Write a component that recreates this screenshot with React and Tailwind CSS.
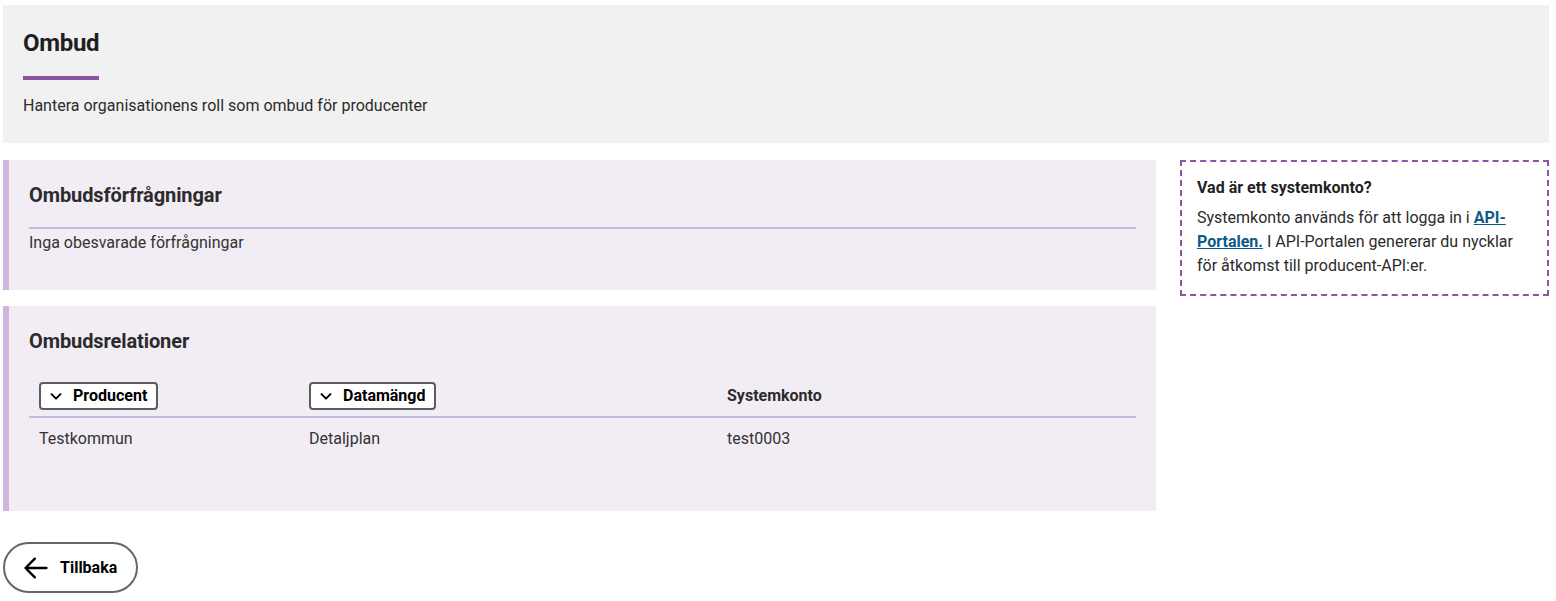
import React from "react";

function Chevron() {
  return (
    <svg width="18" height="18" viewBox="0 0 24 24" fill="none" stroke="currentColor" strokeWidth="2.6" strokeLinecap="round" strokeLinejoin="round">
      <path d="M6 9.5l6 6 6-6" />
    </svg>
  );
}

function SortButton({ label }) {
  return (
    <button className="flex items-center gap-[8px] h-[28px] pl-[6px] pr-[9px] rounded-[4px] border-2 border-[#5c5c5c] bg-white text-[16px] font-bold text-black">
      <Chevron />
      {label}
    </button>
  );
}

function Card({ title, children, className = "" }) {
  return (
    <section className={`border-l-[6px] border-[#cdb7dc] bg-[#f2ecf4] px-5 ${className}`}>
      <h2 className="text-[20px] font-bold text-[#2b2b2b] leading-[28px] tracking-[-0.1px]">{title}</h2>
      {children}
    </section>
  );
}

export default function App() {
  return (
    <div className="min-h-screen bg-white pl-[3px] pr-[7px] pt-[5px] text-[#333]" style={{ fontFamily: "Roboto, 'Noto Sans', sans-serif" }}>
      <header className="bg-[#f1f1f1] px-5 pt-[22px] pb-[25px]">
        <h1 className="text-[24px] font-bold leading-[32px] text-[#1f1f1f] tracking-[-0.3px]">Ombud</h1>
        <div className="mt-[17px] h-[4px] w-[76px] bg-[#8a55a3]" />
        <p className="mt-[14px] text-[16px] leading-[24px] text-[#2b2b2b]">Hantera organisationens roll som ombud för producenter</p>
      </header>

      <div className="mt-[17px] flex gap-6">
        <div className="flex w-[1153px] flex-col gap-4">
          <Card title="Ombudsförfrågningar" className="pt-[21px] h-[130px]">
            <div className="mt-[18px] h-[2px] bg-[#cdb7dc]" />
            <p className="mt-[2px] text-[16px] leading-[24px] text-[#333]">Inga obesvarade förfrågningar</p>
          </Card>

          <Card title="Ombudsrelationer" className="pt-[21px] h-[205px]">
            <div className="mt-[27px] grid grid-cols-[270px_418px_1fr] items-center border-b-2 border-[#cdb7dc] pb-[6px]">
              <div className="pl-[10px]"><SortButton label="Producent" /></div>
              <div className="pl-[10px]"><SortButton label="Datamängd" /></div>
              <div className="pl-[10px] text-[16px] font-bold text-[#2b2b2b]">Systemkonto</div>
            </div>
            <div className="grid grid-cols-[270px_418px_1fr] pt-[9px] text-[16px] leading-[24px] text-[#333]">
              <div className="pl-[10px]">Testkommun</div>
              <div className="pl-[10px]">Detaljplan</div>
              <div className="pl-[10px]">test0003</div>
            </div>
          </Card>
        </div>

        <aside className="flex-1 self-start border-2 border-dashed border-[#8a55a3] px-[15px] pt-[14px] pb-[16px] text-[16px] text-[#2b2b2b]">
          <h3 className="font-bold leading-[24px] text-[#1f1f1f]">Vad är ett systemkonto?</h3>
          <p className="mt-[6px] leading-[24px]">
            Systemkonto används för att logga in i{" "}
            <a href="#" className="font-bold text-[#0b5a8a] underline">API-Portalen.</a>{" "}
            I API-Portalen genererar du nycklar för åtkomst till producent-API:er.
          </p>
        </aside>
      </div>

      <button className="mt-[31px] flex h-[51px] items-center gap-[10px] rounded-full border-2 border-[#666] bg-white pl-[17px] pr-[19px] text-[16px] font-bold text-black">
        <svg width="28" height="28" viewBox="0 0 24 24" fill="none" stroke="currentColor" strokeWidth="2" strokeLinecap="round" strokeLinejoin="round">
          <path d="M21 12H3M11 4l-8 8 8 8" />
        </svg>
        Tillbaka
      </button>
    </div>
  );
}
